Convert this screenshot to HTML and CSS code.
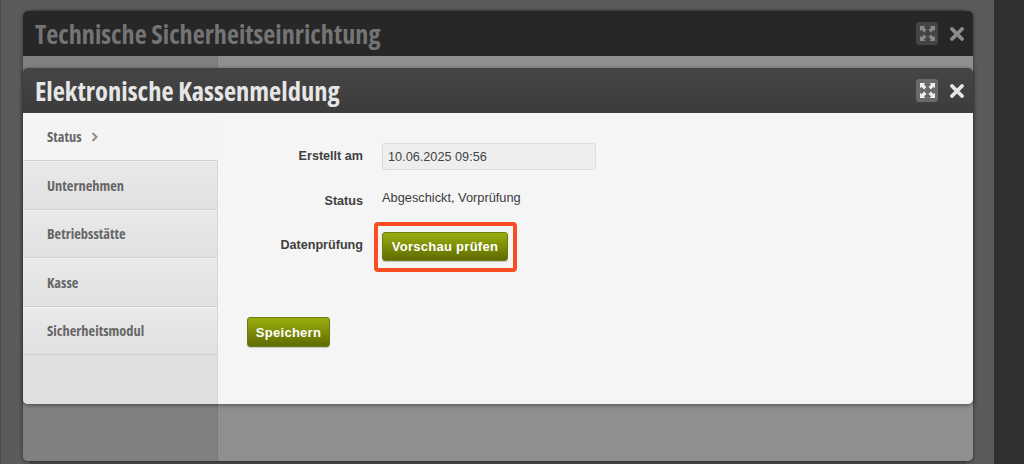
FILE: index.html
```html
<!DOCTYPE html>
<html lang="de">
<head>
<meta charset="utf-8">
<title>Elektronische Kassenmeldung</title>
<link rel="stylesheet" href="styles.css">
</head>
<body>
<div class="desk">
  <div class="ghost"></div>
  <section class="window back">
    <header class="bar">
      <h1 class="title">Technische Sicherheitseinrichtung</h1>
      <div class="tools">
        <span class="expand"><svg viewBox="0 0 14 14" width="15" height="15"><g fill="currentColor"><path d="M0 0h5L3.6 1.4 6 3.8 3.8 6 1.4 3.6 0 5z"/><path d="M14 0H9l1.4 1.4L8 3.8 10.2 6l2.4-2.4L14 5z"/><path d="M0 14h5l-1.4-1.4L6 10.2 3.8 8l-2.4 2.4L0 9z"/><path d="M14 14H9l1.4-1.4L8 10.2 10.2 8l2.4 2.4L14 9z"/></g></svg></span>
        <svg class="close" viewBox="0 0 14 14" width="14" height="14"><path d="M2 2l10 10M12 2L2 12" stroke="currentColor" stroke-width="3.8" stroke-linecap="round"/></svg>
      </div>
    </header>
    <div class="back-body"><div class="back-side"></div></div>
  </section>
  <section class="window front">
    <header class="bar">
      <h1 class="title">Elektronische Kassenmeldung</h1>
      <div class="tools">
        <span class="expand"><svg viewBox="0 0 14 14" width="15" height="15"><g fill="currentColor"><path d="M0 0h5L3.6 1.4 6 3.8 3.8 6 1.4 3.6 0 5z"/><path d="M14 0H9l1.4 1.4L8 3.8 10.2 6l2.4-2.4L14 5z"/><path d="M0 14h5l-1.4-1.4L6 10.2 3.8 8l-2.4 2.4L0 9z"/><path d="M14 14H9l1.4-1.4L8 10.2 10.2 8l2.4 2.4L14 9z"/></g></svg></span>
        <svg class="close" viewBox="0 0 14 14" width="14" height="14"><path d="M2 2l10 10M12 2L2 12" stroke="currentColor" stroke-width="3.8" stroke-linecap="round"/></svg>
      </div>
    </header>
    <div class="content">
      <nav class="side">
        <a class="tab active">Status <svg class="chev" viewBox="0 0 8 10" width="8" height="10"><path d="M1.5 1l4 4-4 4" fill="none" stroke="currentColor" stroke-width="2"/></svg></a>
        <a class="tab">Unternehmen</a>
        <a class="tab">Betriebsstätte</a>
        <a class="tab">Kasse</a>
        <a class="tab">Sicherheitsmodul</a>
      </nav>
      <main class="main">
        <div class="form">
          <div class="label l1">Erstellt am</div>
          <div class="field">10.06.2025 09:56</div>
          <div class="label l2">Status</div>
          <div class="value">Abgeschickt, Vorprüfung</div>
          <div class="label l3">Datenprüfung</div>
          <div class="mark"><button class="btn preview">Vorschau prüfen</button></div>
        </div>
        <button class="btn save">Speichern</button>
      </main>
    </div>
  </section>
</div>
</body>
</html>
```
FILE: styles.css
```css
*, *::before { box-sizing: border-box; }
html, body { margin: 0; height: 100%; }
body { background: #2f3032; overflow: hidden; font-family: "Liberation Sans", Arial, sans-serif; }
.desk { position: relative; width: 994px; height: 464px; background: #5b5b5b; border-left: 1px solid #4a4a4a; }
.ghost { position: absolute; left: 29px; top: 9px; width: 936px; height: 460px; background: #4d4d4d; border-radius: 5px; }
.window { position: absolute; left: 22px; width: 950px; border-radius: 5px; overflow: hidden; box-shadow: 0 1px 4px rgba(0,0,0,.45); }
.back { top: 11px; height: 450px; }
.front { top: 68px; height: 336px; }
.bar { height: 45px; display: flex; align-items: center; justify-content: space-between; padding: 0 9px 0 12px; }
.back .bar { background: #272727; color: #747474; }
.front .bar { background: linear-gradient(#454545, #3c3c3c); color: #e6e6e6; }
.title { margin: 0; font-family: "Open Sans", sans-serif; font-stretch: 75%; font-weight: 700; font-size: 26.5px; line-height: 47px; height: 45px; white-space: nowrap; }
.back .title { font-size: 26.2px; }
.tools { display: flex; align-items: center; gap: 12px; }
.expand { width: 22px; height: 23px; border-radius: 3px; display: flex; align-items: center; justify-content: center; }
.back .expand { background: #444; color: #8a8a8a; }
.back .close { color: #8c8c8c; }
.front .expand { background: #6a6a6a; color: #f0f0f0; }
.front .close { color: #e6e6e6; }
.back-body { height: 405px; background: #8f8f8f; }
.back-side { width: 195px; height: 100%; background: #808080; border-right: 1px solid #777; }
.content { display: flex; height: 291px; background: #f5f5f5; }
.side { width: 195px; background: #e0e0e0; border-right: 1px solid #d8d8d8; }
.tab { display: flex; align-items: center; gap: 9px; height: 48.4px; padding-left: 24px; font-family: "Open Sans", sans-serif; font-stretch: 75%; font-weight: 700; font-size: 14.4px; color: #666; background: linear-gradient(#e9e9e9, #e1e1e1); border-top: 1px solid #f4f4f4; border-bottom: 1px solid #cfcfcf; }
.tab.active { background: #f4f4f4; border-top: 0; margin-right: -1px; }
.chev { color: #8d8d8d; }
.main { flex: 1; position: relative; padding: 30px 0 0 29px; font-size: 12.7px; color: #3c3c3c; }
.form { display: grid; grid-template-columns: 116px 214px; column-gap: 19px; grid-template-rows: 27px 26px 29px; row-gap: 18px; align-items: start; }
.label { text-align: right; font-weight: 700; font-size: 12.6px; color: #404040; line-height: 15px; }
.l1 { padding-top: 6px; }
.l2 { margin-top: 6px; }
.l3 { margin-top: 6px; }
.field { height: 27px; line-height: 27px; padding-left: 5px; background: #eeeeee; border: 1px solid #dcdcdc; border-radius: 3px; color: #444; }
.value { font-size: 12.8px; line-height: 15px; margin-top: 2px; }
.mark { position: relative; }
.mark::before { content: ""; position: absolute; left: -8px; top: -10px; width: 143px; height: 50px; border: 4px solid #f84d25; border-radius: 4px; }
.btn { display: block; height: 29px; padding: 0; border: 1px solid #6d7a10; border-radius: 3px; background: linear-gradient(#9aae0e, #5f6b00); color: #fff; font: 700 13px "Liberation Sans", Arial, sans-serif; letter-spacing: .27px; box-shadow: 0 1px 1px rgba(0,0,0,.2); }
.preview { position: relative; width: 126px; }
.save { width: 83px; height: 30px; margin-top: 56px; }
```
